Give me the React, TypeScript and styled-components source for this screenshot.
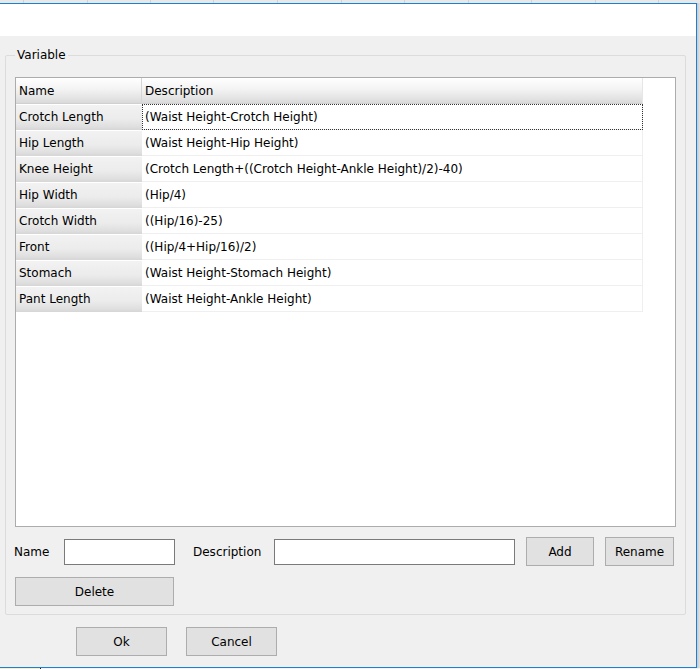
import styled, { createGlobalStyle } from 'styled-components';

const GlobalStyle = createGlobalStyle`
  html, body {
    margin: 0;
    padding: 0;
    background: #dadada;
  }
  body {
    font-family: "DejaVu Sans", Tahoma, sans-serif;
    font-size: 12px;
    color: #000;
  }
`;

const variables = [
  { name: 'Crotch Length', desc: '(Waist Height-Crotch Height)' },
  { name: 'Hip Length', desc: '(Waist Height-Hip Height)' },
  { name: 'Knee Height', desc: '(Crotch Length+((Crotch Height-Ankle Height)/2)-40)' },
  { name: 'Hip Width', desc: '(Hip/4)' },
  { name: 'Crotch Width', desc: '((Hip/16)-25)' },
  { name: 'Front', desc: '((Hip/4+Hip/16)/2)' },
  { name: 'Stomach', desc: '(Waist Height-Stomach Height)' },
  { name: 'Pant Length', desc: '(Waist Height-Ankle Height)' },
];

export default function App() {
  return (
    <>
      <GlobalStyle />
      <Screen>
        <BackdropStrip />
        <WindowRow>
          <Dialog>
            <TitleBar />
            <Body>
              <GroupBox>
                <Legend>Variable</Legend>
                <ListView>
                  <Grid>
                    <HeadCell>Name</HeadCell>
                    <HeadCell>Description</HeadCell>
                    {variables.map((v, i) => (
                      <Row key={v.name}>
                        <NameCell>{v.name}</NameCell>
                        <DescCell focused={i === 0}>{v.desc}</DescCell>
                      </Row>
                    ))}
                  </Grid>
                </ListView>
                <FormRow>
                  <FieldLabel width={50}>Name</FieldLabel>
                  <TextBox width={111} />
                  <FieldLabel width={81} style={{ marginLeft: 18 }}>
                    Description
                  </FieldLabel>
                  <TextBox width={241} />
                  <Button width={68} gap={11}>Add</Button>
                  <Button width={69} gap={11}>Rename</Button>
                </FormRow>
                <DeleteRow>
                  <Button width={159}>Delete</Button>
                </DeleteRow>
              </GroupBox>
              <Footer>
                <Button width={91}>Ok</Button>
                <Button width={91} gap={19}>Cancel</Button>
              </Footer>
            </Body>
          </Dialog>
          <Shadow />
        </WindowRow>
        <TaskStrip />
      </Screen>
    </>
  );
}

const Screen = styled.div`
  width: 700px;
  height: 669px;
  overflow: hidden;
  display: flex;
  flex-direction: column;
  background: #dadada;
`;

const BackdropStrip = styled.div`
  height: 3px;
  flex: none;
  background: repeating-linear-gradient(
    to right,
    #e8e8e8 0px,
    #e8e8e8 23px,
    #d2d2d2 23px,
    #d2d2d2 24px,
    #e8e8e8 24px,
    #e8e8e8 63.5px
  );
`;

const WindowRow = styled.div`
  display: flex;
  height: 665px;
  flex: none;
`;

const Dialog = styled.div`
  width: 697px;
  box-sizing: border-box;
  border-top: 1px solid #1c7fd6;
  border-right: 1px solid #1c7fd6;
  border-bottom: 1px solid #1c7fd6;
  display: flex;
  flex-direction: column;
  background: #f0f0f0;
`;

const Shadow = styled.div`
  flex: 1;
  background: linear-gradient(to right, #c9c9c9, #e2e2e2);
`;

const TaskStrip = styled.div`
  flex: 1;
  background: linear-gradient(
    to right,
    #f3f0d2 0px,
    #f3f0d2 40px,
    #222 40px,
    #222 41px,
    #f4f4f4 41px
  );
`;

const TitleBar = styled.div`
  height: 32px;
  flex: none;
  background: #fff;
`;

const Body = styled.div`
  flex: 1;
  padding: 11px 0 0 5px;
  box-sizing: border-box;
`;

const GroupBox = styled.fieldset`
  width: 681px;
  box-sizing: border-box;
  margin: 0;
  padding: 0 9px 8px 9px;
  border: 1px solid #dcdcdc;
  border-radius: 2px;
`;

const Legend = styled.legend`
  padding: 0 2px;
  margin-left: 0;
  line-height: 17px;
  font-size: 12px;
`;

const ListView = styled.div`
  margin-top: 13px;
  height: 450px;
  box-sizing: border-box;
  border: 1px solid #acacac;
  background: #fff;
`;

const Grid = styled.div`
  display: grid;
  grid-template-columns: 126px 501px;
  grid-auto-rows: 26px;
  width: 627px;
`;

const HeadCell = styled.div`
  display: flex;
  align-items: center;
  padding-left: 3px;
  box-sizing: border-box;
  background: linear-gradient(to bottom, #ffffff 0%, #f3f3f3 45%, #e4e4e4 80%, #d9d9d9 100%);
  border-right: 1px solid #d5d5d5;
  border-bottom: 1px solid #d0d0d0;

  &:nth-child(2) {
    border-right: 1px solid #e6e6e6;
  }
`;

const Row = styled.div`
  display: contents;
`;

const NameCell = styled.div`
  display: flex;
  align-items: center;
  padding: 0 0 1px 3px;
  box-sizing: border-box;
  border-top: 1px solid #ffffff;
  background: linear-gradient(to bottom, #f2f2f2 0%, #ececec 55%, #e0e0e0 85%, #d6d6d6 100%);
`;

const DescCell = styled.div<{ focused?: boolean }>`
  display: flex;
  align-items: center;
  padding-left: 3px;
  box-sizing: border-box;
  background: #fff;
  border-bottom: 1px solid #efefef;
  border-right: 1px solid #efefef;
  outline: ${props => (props.focused ? '1px dotted #333' : 'none')};
  outline-offset: -1px;
`;

const FormRow = styled.div`
  display: flex;
  align-items: center;
  margin: 10px 0 0 -1px;
  height: 29px;
`;

const FieldLabel = styled.span<{ width: number }>`
  width: ${props => props.width}px;
  flex: none;
  font-size: 12px;
`;

const TextBox = styled.input<{ width: number }>`
  width: ${props => props.width}px;
  height: 26px;
  box-sizing: border-box;
  flex: none;
  margin: 0;
  border: 1px solid #7a7a7a;
  background: #fff;
  outline: none;
`;

const Button = styled.button<{ width: number; gap?: number }>`
  width: ${props => props.width}px;
  height: 29px;
  flex: none;
  margin: 0 0 0 ${props => props.gap ?? 0}px;
  padding: 0;
  box-sizing: border-box;
  border: 1px solid #adadad;
  background: #e1e1e1;
  font-family: "DejaVu Sans", Tahoma, sans-serif;
  font-size: 12px;
  color: #000;
`;

const DeleteRow = styled.div`
  display: flex;
  margin-top: 11px;
`;

const Footer = styled.div`
  display: flex;
  padding: 12px 0 0 71px;
`;
